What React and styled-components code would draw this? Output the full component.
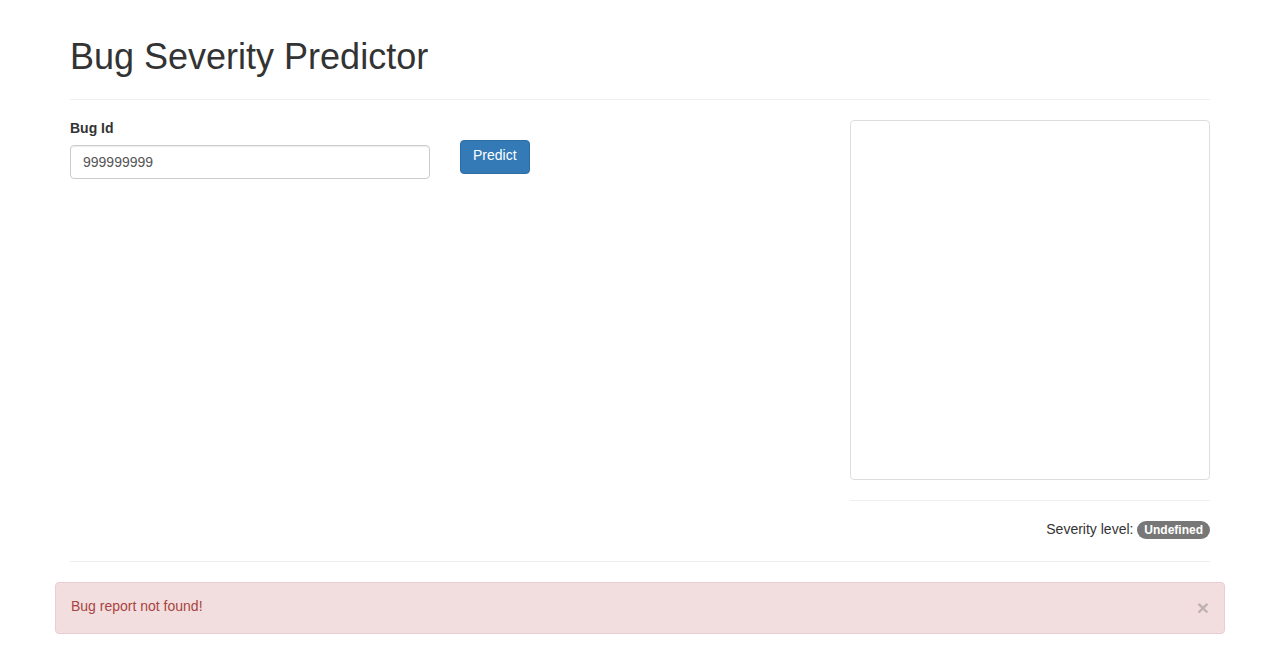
import React from "react";
import styled, { createGlobalStyle } from "styled-components";

const GlobalStyle = createGlobalStyle`
  html, body {
    margin: 0;
    padding: 0;
    background: #fff;
  }
  body {
    font-family: "Liberation Sans", Arial, Helvetica, sans-serif;
    font-size: 14px;
    line-height: 1.42857143;
    color: #333;
  }
  * {
    box-sizing: border-box;
  }
`;

const Page = styled.div`
  width: 1170px;
  margin: 0 auto;
`;

const Main = styled.div`
  padding: 0 15px;
`;

const Header = styled.div`
  padding-bottom: 22px;
  border-bottom: 1px solid #eee;
`;

const Title = styled.h1`
  margin: 37px 0 0;
  font-size: 36px;
  font-weight: 500;
  line-height: 1.1;
  color: #333;
`;

const Body = styled.div`
  display: flex;
  justify-content: space-between;
  margin-top: 20px;
`;

const FormRow = styled.div`
  display: flex;
  align-items: flex-start;
  gap: 30px;
`;

const Field = styled.div`
  width: 360px;
`;

const Label = styled.label`
  display: block;
  margin-bottom: 9px;
  font-weight: bold;
  line-height: 16px;
`;

const Input = styled.input`
  display: block;
  width: 100%;
  height: 34px;
  padding: 6px 12px;
  font-family: inherit;
  font-size: 14px;
  line-height: 20px;
  color: #555;
  background: #fff;
  border: 1px solid #ccc;
  border-radius: 4px;
  box-shadow: inset 0 1px 1px rgba(0, 0, 0, 0.075);
  outline: none;
`;

const Button = styled.button`
  margin-top: 20px;
  height: 34px;
  padding: 4px 12px 8px;
  font-family: inherit;
  font-size: 14px;
  line-height: 20px;
  color: #fff;
  background: #337ab7;
  border: 1px solid #2e6da4;
  border-radius: 4px;
  cursor: pointer;
`;

const Side = styled.div`
  width: 360px;
`;

const Panel = styled.div`
  height: 360px;
  border: 1px solid #ddd;
  border-radius: 4px;
`;

const Rule = styled.hr`
  margin: 20px 0;
  border: 0;
  border-top: 1px solid #eee;
`;

const Severity = styled.p`
  margin: 0;
  text-align: right;
  line-height: 16px;
  padding: 0 0 2px;
`;

const Badge = styled.span`
  display: inline-block;
  min-width: 10px;
  padding: 3px 7px;
  font-size: 12px;
  font-weight: bold;
  line-height: 1;
  color: #fff;
  text-align: center;
  white-space: nowrap;
  vertical-align: middle;
  background: #777;
  border-radius: 10px;
`;

const Alert = styled.div`
  display: flex;
  justify-content: space-between;
  align-items: flex-start;
  padding: 13px 15px 17px;
  color: #a94442;
  background: #f2dede;
  border: 1px solid #ebccd1;
  border-radius: 4px;
  line-height: 20px;
`;

const Close = styled.button`
  padding: 0;
  margin: 4px 0 0;
  font-family: inherit;
  font-size: 21px;
  font-weight: bold;
  line-height: 16px;
  color: #000;
  opacity: 0.2;
  background: transparent;
  border: 0;
  cursor: pointer;
`;

export default function App() {
  return (
    <Page>
      <GlobalStyle />
      <Main>
        <Header>
          <Title>Bug Severity Predictor</Title>
        </Header>
        <Body>
          <FormRow>
            <Field>
              <Label htmlFor="bugId">Bug Id</Label>
              <Input id="bugId" type="text" defaultValue="999999999" />
            </Field>
            <Button type="button">Predict</Button>
          </FormRow>
          <Side>
            <Panel />
            <Rule />
            <Severity>
              Severity level: <Badge>Undefined</Badge>
            </Severity>
          </Side>
        </Body>
        <Rule />
      </Main>
      <Alert>
        <span>Bug report not found!</span>
        <Close type="button" aria-label="Close">
          ×
        </Close>
      </Alert>
    </Page>
  );
}
